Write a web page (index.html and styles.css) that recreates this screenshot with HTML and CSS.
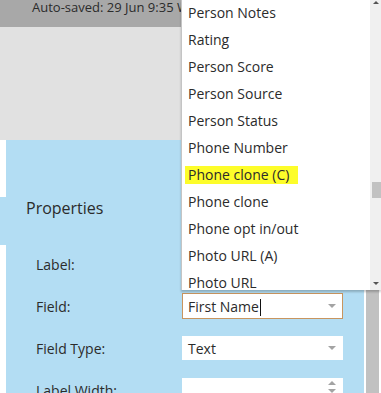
FILE: index.html
```html
<!DOCTYPE html>
<html lang="en">
<head>
<meta charset="utf-8">
<title>Form properties</title>
<link rel="stylesheet" href="styles.css">
</head>
<body>
<div class="page">
  <header class="topbar"><span class="autosave">Auto-saved: 29 Jun 9:35 WIB</span></header>
  <div class="canvas"></div>
  <div class="workspace">
    <div class="gutter"><div class="tab"></div></div>
    <section class="props">
      <h2 class="props-title">Properties</h2>
      <div class="form">
        <div class="lbl">Label:</div>
        <div class="input"></div>
        <div class="lbl">Field:</div>
        <div class="input focused"><span class="val">First Name<span class="caret"></span></span><span class="arrow"></span></div>
        <div class="lbl">Field Type:</div>
        <div class="input"><span class="val">Text</span><span class="arrow"></span></div>
        <div class="lbl">Label Width:</div>
        <div class="input"><span class="val"></span><span class="spinner"><span class="up"></span><span class="down"></span></span></div>
      </div>
    </section>
    <div class="gap"></div>
    <div class="rail"></div>
    <div class="edge"></div>
  </div>

  <div class="dropdown">
    <ul class="options">
      <li>Person Notes</li>
      <li>Rating</li>
      <li>Person Score</li>
      <li>Person Source</li>
      <li>Person Status</li>
      <li>Phone Number</li>
      <li><span class="mark">Phone clone (C)</span></li>
      <li>Phone clone</li>
      <li>Phone opt in/out</li>
      <li>Photo URL (A)</li>
      <li>Photo URL</li>
    </ul>
    <div class="scrollbar">
      <span class="sb-up"></span>
      <span class="thumb"></span>
      <span class="sb-down"></span>
    </div>
  </div>
</div>
</body>
</html>
```

FILE: styles.css
```css
* { box-sizing: border-box; }
html, body { margin: 0; padding: 0; }
body {
  font-family: "Open Sans", "Liberation Sans", sans-serif;
  color: #333;
  overflow: hidden;
  width: 381px;
  height: 393px;
  background: #fff;
}
.page {
  position: relative;
  width: 381px;
  height: 393px;
  display: flex;
  flex-direction: column;
  overflow: hidden;
}
.topbar {
  height: 27px;
  background: #a8a8a8;
  padding-left: 32px;
  font-size: 13px;
  line-height: 15px;
  color: #2b2b2b;
  white-space: nowrap;
  flex: none;
}
.canvas {
  height: 113px;
  background: #e1e1e1;
  flex: none;
}
.workspace {
  flex: 1;
  display: flex;
  min-height: 0;
}
.gutter {
  width: 6px;
  background: #fff;
  flex: none;
}
.tab {
  margin-top: 57px;
  height: 48px;
  background: #b3ddf3;
}
.props {
  width: 358px;
  flex: none;
  background: #b3ddf3;
}
.props-title {
  margin: 57px 0 0;
  height: 48px;
  line-height: 22px;
  padding-left: 20px;
  font-size: 16px;
  font-weight: 400;
  color: #2b2b2b;
}
.form {
  margin-top: 6px;
  padding-left: 30px;
  display: grid;
  grid-template-columns: 146px 161px;
  grid-auto-rows: 26px;
  row-gap: 16px;
  align-items: center;
}
.lbl {
  font-size: 14px;
  color: #2b2b2b;
}
.input {
  height: 24px;
  background: #fff;
  display: flex;
  align-items: center;
  justify-content: space-between;
  padding: 0 7px 0 6px;
  font-size: 14px;
  color: #2b2b2b;
}
.input.focused {
  height: 26px;
  border: 1px solid #c8955f;
  padding: 0 6px 0 5px;
}
.caret {
  display: inline-block;
  width: 1px;
  height: 17px;
  background: #111;
  vertical-align: -4px;
  margin-left: 1px;
}
.arrow {
  width: 0;
  height: 0;
  border-left: 4px solid transparent;
  border-right: 4px solid transparent;
  border-top: 4px solid #a3a3a3;
}
.spinner {
  align-self: flex-start;
  margin-top: 3px;
  display: flex;
  flex-direction: column;
  gap: 4px;
}
.spinner .up {
  width: 0; height: 0;
  border-left: 4px solid transparent;
  border-right: 4px solid transparent;
  border-bottom: 4px solid #a3a3a3;
}
.spinner .down {
  width: 0; height: 0;
  border-left: 4px solid transparent;
  border-right: 4px solid transparent;
  border-top: 4px solid #a3a3a3;
}
.gap { width: 2px; background: #fff; flex: none; }
.rail { width: 13px; background: #c1c1c1; flex: none; }
.edge { flex: 1; background: #fff; }

/* dropdown overlay */
.dropdown {
  position: absolute;
  left: 181px;
  top: 0;
  width: 200px;
  height: 290px;
  background: #fff;
  border-left: 1px solid #c4c4c4;
  box-shadow: 0 2px 2px rgba(0, 0, 0, 0.22);
  display: flex;
  overflow: hidden;
}
.options {
  list-style: none;
  margin: -1px 0 0;
  padding: 0;
  flex: 1;
}
.options li {
  height: 27px;
  line-height: 27px;
  padding-left: 6px;
  font-size: 14px;
  color: #2b2b2b;
  white-space: nowrap;
}
.mark {
  display: inline-block;
  line-height: 18px;
  background: #fdfd2a;
  padding: 0 9px 0 3px;
  margin-left: -3px;
}
.scrollbar {
  width: 11px;
  flex: none;
  background: #f0f0f0;
  display: flex;
  flex-direction: column;
  align-items: flex-end;
}
.sb-up {
  margin: 1px 2px 0 0;
  width: 0; height: 0;
  border-left: 3px solid transparent;
  border-right: 3px solid transparent;
  border-bottom: 3px solid #555;
}
.thumb {
  margin-top: 178px;
  width: 9px;
  height: 16px;
  background: #c2c2c2;
}
.sb-down {
  margin: 84px 2px 0 0;
  width: 0; height: 0;
  border-left: 3px solid transparent;
  border-right: 3px solid transparent;
  border-top: 3px solid #555;
}
```
